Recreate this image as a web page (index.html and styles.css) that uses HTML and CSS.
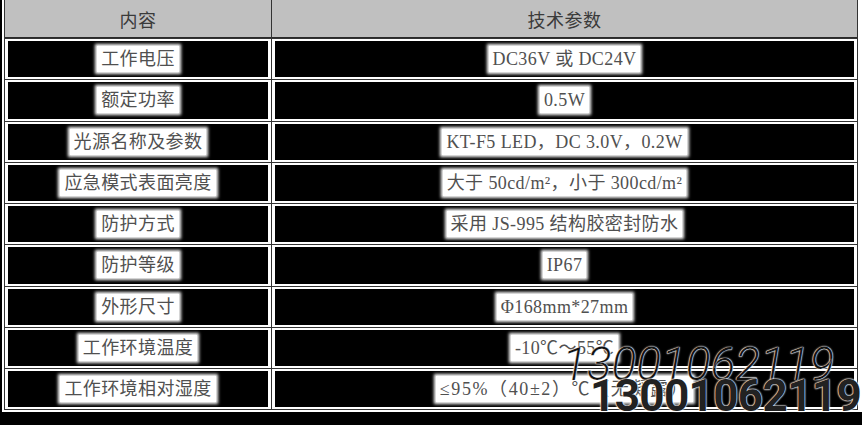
FILE: index.html
```html
<!DOCTYPE html>
<html lang="zh-CN">
<head>
<meta charset="utf-8">
<title>技术参数</title>
<link rel="stylesheet" href="styles.css">
</head>
<body>
<div class="page">
  <div class="wrap">
    <div class="grid">
      <div class="cell head"><span class="htxt">内容</span></div>
      <div class="cell head"><span class="htxt">技术参数</span></div>

      <div class="cell"><div class="fill"><span class="t">工作电压</span></div></div>
      <div class="cell"><div class="fill"><span class="t">DC36V 或 DC24V</span></div></div>

      <div class="cell"><div class="fill"><span class="t">额定功率</span></div></div>
      <div class="cell"><div class="fill"><span class="t">0.5W</span></div></div>

      <div class="cell"><div class="fill"><span class="t">光源名称及参数</span></div></div>
      <div class="cell"><div class="fill"><span class="t">KT-F5 LED，DC 3.0V，0.2W</span></div></div>

      <div class="cell"><div class="fill"><span class="t">应急模式表面亮度</span></div></div>
      <div class="cell"><div class="fill"><span class="t">大于 50cd/m²，小于 300cd/m²</span></div></div>

      <div class="cell"><div class="fill"><span class="t">防护方式</span></div></div>
      <div class="cell"><div class="fill"><span class="t">采用 JS-995 结构胶密封防水</span></div></div>

      <div class="cell"><div class="fill"><span class="t">防护等级</span></div></div>
      <div class="cell"><div class="fill"><span class="t">IP67</span></div></div>

      <div class="cell"><div class="fill"><span class="t">外形尺寸</span></div></div>
      <div class="cell"><div class="fill"><span class="t">Φ168mm*27mm</span></div></div>

      <div class="cell"><div class="fill"><span class="t">工作环境温度</span></div></div>
      <div class="cell"><div class="fill"><span class="t">-10℃～55℃</span></div></div>

      <div class="cell"><div class="fill"><span class="t">工作环境相对湿度</span></div></div>
      <div class="cell"><div class="fill"><span class="t wide">≤95%（40±2）℃（无凝露）</span></div></div>
    </div>
  </div>
  <div class="mark mark-thin">13001062119</div>
  <div class="mark mark-bold">13001062119</div>
</div>
</body>
</html>
```

FILE: styles.css
```css
html, body {
  margin: 0;
  padding: 0;
  background: #000;
}

.page {
  position: relative;
  width: 862px;
  height: 425px;
  overflow: hidden;
}

.wrap {
  margin-left: 2px;
  padding: 0 4px 2px 2px;
  background: #fff;
  box-sizing: border-box;
  width: 860px;
}

.grid {
  display: grid;
  grid-template-columns: 266px 585px;
  grid-template-rows: 38px repeat(9, 40.25px);
  gap: 1px;
  padding: 0 1px 1px 1px;
  background: #333;
}

.cell {
  background: #fff;
  padding: 2px 3px;
  box-sizing: border-box;
  display: flex;
}

.cell.head {
  background: #c0c0c0;
  padding: 0;
  align-items: center;
  justify-content: center;
  border-bottom: 1px solid #2a2a2a;
}

.htxt {
  font-family: "Liberation Serif", "Noto Sans CJK SC", serif;
  font-size: 18px;
  letter-spacing: 0.5px;
  color: #3a3a3a;
}

.fill {
  flex: 1;
  background: #000;
  display: flex;
  align-items: center;
  justify-content: center;
}

.t {
  font-family: "Liberation Serif", "Noto Sans CJK SC", serif;
  font-size: 18px;
  line-height: 22px;
  letter-spacing: 0.4px;
  color: #505050;
  background: #fff;
  padding: 2px 4px;
  box-shadow: 0 0 3px 2px #fff;
}

.t.wide {
  letter-spacing: 1.6px;
}

.mark {
  position: absolute;
  font-family: Roboto, "Liberation Sans", sans-serif;
  line-height: 1;
  white-space: nowrap;
}

.mark-thin {
  left: 562px;
  top: 341px;
  font-size: 46px;
  font-weight: 300;
  font-style: italic;
  color: #111;
  -webkit-text-stroke: 0.2px #fff;
  text-shadow: 0 0 1px #fff, 0 0 2px #fff;
}

.mark-bold {
  left: 590px;
  top: 374px;
  font-size: 44px;
  font-weight: 700;
  letter-spacing: -0.6px;
  color: #222;
  text-shadow: 0 0 1px #fff, 0 0 2px #fff, 0 0 2px #fff;
}
```
